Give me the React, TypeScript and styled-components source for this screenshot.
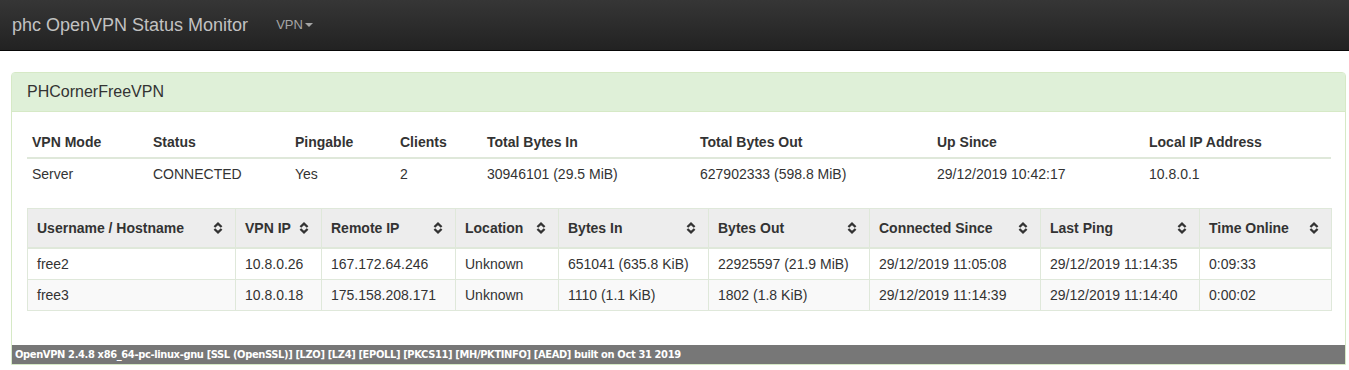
import styled, { createGlobalStyle } from 'styled-components';

const GlobalStyle = createGlobalStyle`
  html, body {
    margin: 0;
    padding: 0;
    background: #fff;
    font-family: 'Liberation Sans', Arial, sans-serif;
    font-size: 14px;
    line-height: 20px;
    color: #333;
  }
`;

const Navbar = styled.div`
  height: 51px;
  box-sizing: border-box;
  background: linear-gradient(#363636, #222);
  border-bottom: 1px solid #080808;
  display: flex;
  align-items: center;
  padding-left: 12px;
`;

const Brand = styled.span`
  font-size: 18px;
  color: #c2c2c2;
  margin-right: 28px;
  margin-top: -1px;
`;

const NavLink = styled.span`
  font-size: 13px;
  color: #a5a5a5;
  display: flex;
  align-items: center;
`;

const Caret = styled.span`
  display: inline-block;
  width: 0;
  height: 0;
  margin-left: 2px;
  border-top: 4px solid #a5a5a5;
  border-left: 4px solid transparent;
  border-right: 4px solid transparent;
`;

const Panel = styled.div`
  margin: 21px 0 0 11px;
  width: 1335px;
  box-sizing: border-box;
  border: 1px solid #d6e9c6;
  border-radius: 4px 4px 0 0;
  background: #fff;
`;

const PanelHeading = styled.div`
  background: #dff0d8;
  border-bottom: 1px solid #d6e9c6;
  padding: 10px 15px;
  font-size: 16px;
  line-height: 18px;
  color: #333;
`;

const PanelBody = styled.div`
  padding: 15px;
`;

const Table = styled.table<{ $bordered?: boolean }>`
  width: 1304px;
  table-layout: fixed;
  border-collapse: collapse;
  margin-bottom: 20px;
  ${(p) => (p.$bordered ? 'border: 1px solid #dfe8da; margin-top: -1px;' : '')}
`;

const Th = styled.th<{ $bordered?: boolean }>`
  text-align: left;
  font-weight: bold;
  white-space: nowrap;
  padding: ${(p) => (p.$bordered ? '9px 8px 9px 9px' : '5px')};
  border-bottom: 2px solid #dfe8da;
  ${(p) => (p.$bordered ? 'border-left: 1px solid #dfe8da; background: #ededed;' : '')}
`;

const Td = styled.td<{ $bordered?: boolean }>`
  padding: ${(p) => (p.$bordered ? '5px 8px 5px 9px' : '5px')};
  white-space: nowrap;
  ${(p) => (p.$bordered ? 'border: 1px solid #dfe8da;' : '')}
`;

const Row = styled.tr<{ $striped?: boolean }>`
  background: ${(p) => (p.$striped ? '#f9f9f9' : '#fff')};
`;

const SortHead = styled.div`
  display: flex;
  justify-content: space-between;
  align-items: center;
  padding-right: 4px;
`;

const Footer = styled.div`
  background: #777;
  color: #fff;
  font-family: 'Liberation Sans Narrow', 'DejaVu Sans Condensed', 'Arial Narrow', sans-serif;
  font-weight: bold;
  font-size: 11px;
  letter-spacing: -0.35px;
  line-height: 19px;
  padding: 0 3px;
  margin-top: -1px;
`;

const SortIcon = () => (
  <svg width="10" height="12" viewBox="0 0 10 12">
    <path d="M1.4 5 L5 1.6 L8.6 5" fill="none" stroke="#333" strokeWidth="2.3" />
    <path d="M1.4 7 L5 10.4 L8.6 7" fill="none" stroke="#333" strokeWidth="2.3" />
  </svg>
);

const summaryCols = [121, 142, 105, 87, 213, 237, 212, 187];
const summaryHead = ['VPN Mode', 'Status', 'Pingable', 'Clients', 'Total Bytes In', 'Total Bytes Out', 'Up Since', 'Local IP Address'];
const summaryRow = ['Server', 'CONNECTED', 'Yes', '2', '30946101 (29.5 MiB)', '627902333 (598.8 MiB)', '29/12/2019 10:42:17', '10.8.0.1'];

const clientCols = [208, 86, 134, 103, 150, 161, 171, 159, 132];
const clientHead = ['Username / Hostname', 'VPN IP', 'Remote IP', 'Location', 'Bytes In', 'Bytes Out', 'Connected Since', 'Last Ping', 'Time Online'];
const clients = [
  ['free2', '10.8.0.26', '167.172.64.246', 'Unknown', '651041 (635.8 KiB)', '22925597 (21.9 MiB)', '29/12/2019 11:05:08', '29/12/2019 11:14:35', '0:09:33'],
  ['free3', '10.8.0.18', '175.158.208.171', 'Unknown', '1110 (1.1 KiB)', '1802 (1.8 KiB)', '29/12/2019 11:14:39', '29/12/2019 11:14:40', '0:00:02'],
];

export default function App() {
  return (
    <>
      <GlobalStyle />
      <Navbar>
        <Brand>phc OpenVPN Status Monitor</Brand>
        <NavLink>
          VPN<Caret />
        </NavLink>
      </Navbar>
      <Panel>
        <PanelHeading>PHCornerFreeVPN</PanelHeading>
        <PanelBody>
          <Table>
            <colgroup>
              {summaryCols.map((w, i) => (
                <col key={i} style={{ width: w }} />
              ))}
            </colgroup>
            <thead>
              <tr>
                {summaryHead.map((h) => (
                  <Th key={h}>{h}</Th>
                ))}
              </tr>
            </thead>
            <tbody>
              <tr>
                {summaryRow.map((c, i) => (
                  <Td key={i}>{c}</Td>
                ))}
              </tr>
            </tbody>
          </Table>
          <Table $bordered>
            <colgroup>
              {clientCols.map((w, i) => (
                <col key={i} style={{ width: w }} />
              ))}
            </colgroup>
            <thead>
              <tr>
                {clientHead.map((h) => (
                  <Th key={h} $bordered>
                    <SortHead>
                      {h}
                      <SortIcon />
                    </SortHead>
                  </Th>
                ))}
              </tr>
            </thead>
            <tbody>
              {clients.map((row, r) => (
                <Row key={r} $striped={r % 2 === 1}>
                  {row.map((c, i) => (
                    <Td key={i} $bordered>
                      {c}
                    </Td>
                  ))}
                </Row>
              ))}
            </tbody>
          </Table>
        </PanelBody>
        <Footer>
          OpenVPN 2.4.8 x86_64-pc-linux-gnu [SSL (OpenSSL)] [LZO] [LZ4] [EPOLL] [PKCS11] [MH/PKTINFO] [AEAD] built on Oct 31 2019
        </Footer>
      </Panel>
    </>
  );
}
